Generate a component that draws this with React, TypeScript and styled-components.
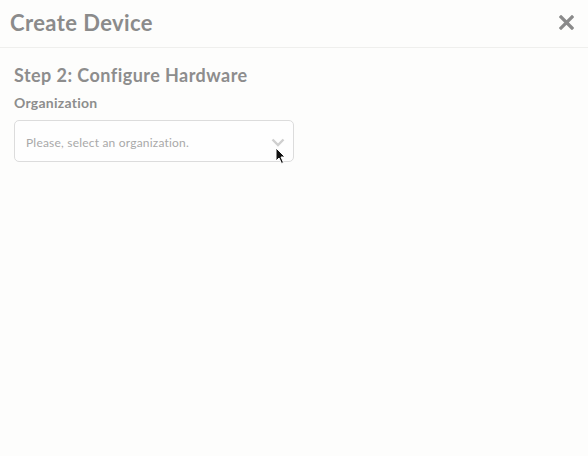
import React from 'react'
import styled, { createGlobalStyle } from 'styled-components'

const GlobalStyle = createGlobalStyle`
  html, body {
    margin: 0;
    padding: 0;
    background: #fdfdfc;
    font-family: Lato, "Noto Sans", "Liberation Sans", sans-serif;
  }
`

const Modal = styled.div`
  width: 588px;
  height: 456px;
  background: #fdfdfc;
  display: flex;
  flex-direction: column;
`

const Header = styled.div`
  height: 48px;
  box-sizing: border-box;
  display: flex;
  align-items: center;
  justify-content: space-between;
  padding: 0 13px 3px 10px;
  border-bottom: 1px solid #efefed;
`

const Title = styled.h1`
  margin: 0;
  font-size: 22px;
  font-weight: 700;
  color: #8b8b8b;
  letter-spacing: 0.4px;
`

const CloseButton = styled.button`
  background: none;
  border: none;
  padding: 0;
  width: 18px;
  height: 18px;
  display: flex;
  align-items: center;
  justify-content: center;
  cursor: pointer;
`

const Body = styled.div`
  padding: 16px 14px;
  display: flex;
  flex-direction: column;
`

const StepTitle = styled.h2`
  margin: 0 0 8px;
  font-size: 18px;
  font-weight: 700;
  color: #8d8d8d;
  line-height: 22px;
  letter-spacing: 0.45px;
`

const Label = styled.label`
  font-size: 14px;
  font-weight: 700;
  color: #8d8d8d;
  line-height: 18px;
  margin-bottom: 8px;
  letter-spacing: 0.25px;
`

const SelectBox = styled.div`
  position: relative;
  width: 280px;
  height: 42px;
  box-sizing: border-box;
  border: 1px solid #dcdcdc;
  border-radius: 5px;
  background: #fefefe;
  display: flex;
  align-items: center;
  justify-content: space-between;
  padding: 2px 8px 0 11px;
`

const Placeholder = styled.span`
  font-size: 12px;
  color: #a9a9a9;
  letter-spacing: 0.2px;
`

const Pointer = styled.svg`
  position: absolute;
  left: 260px;
  top: 26px;
`

export default function App() {
  return (
    <>
      <GlobalStyle />
      <Modal>
        <Header>
          <Title>Create Device</Title>
          <CloseButton aria-label="Close">
            <svg width="15" height="15" viewBox="0 0 15 15">
              <path d="M2 2 L13 13 M13 2 L2 13" stroke="#8a8a8a" strokeWidth="3.2" strokeLinecap="square" />
            </svg>
          </CloseButton>
        </Header>
        <Body>
          <StepTitle>Step 2: Configure Hardware</StepTitle>
          <Label>Organization</Label>
          <SelectBox>
            <Placeholder>Please, select an organization.</Placeholder>
            <svg width="14" height="9" viewBox="0 0 14 9">
              <path d="M1.5 1.5 L7 7 L12.5 1.5" fill="none" stroke="#cfcfcf" strokeWidth="2.4" />
            </svg>
            <Pointer width="12" height="18" viewBox="0 0 12 18">
              <path d="M1 1 L1 14 L4 11 L6.5 16.5 L8.5 15.5 L6 10 L10 10 Z" fill="#111" stroke="#fff" strokeWidth="1" />
            </Pointer>
          </SelectBox>
        </Body>
      </Modal>
    </>
  )
}
